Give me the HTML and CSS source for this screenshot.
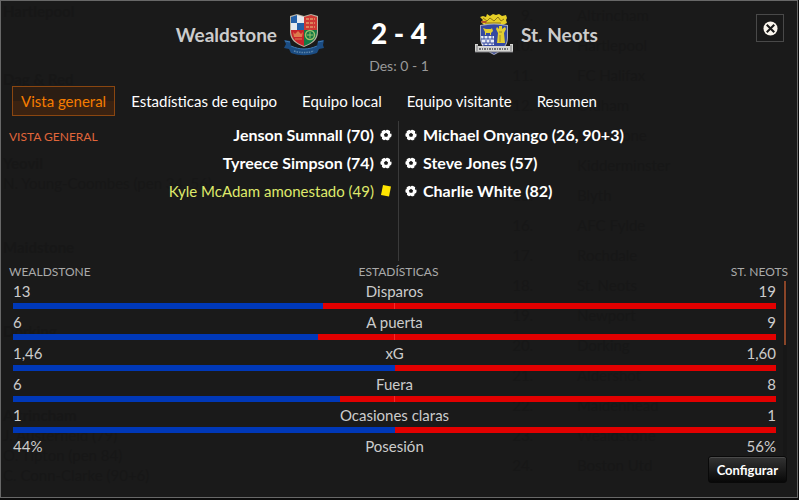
FILE: index.html
```html
<!DOCTYPE html>
<html lang="es">
<head>
<meta charset="utf-8">
<title>Wealdstone 2 - 4 St. Neots</title>
<link rel="stylesheet" href="styles.css">
</head>
<body>
<svg width="0" height="0" class="defs" aria-hidden="true">
  <symbol id="ball" viewBox="0 0 12 12">
    <circle cx="6" cy="6" r="5.600" fill="#fff"/>
    <path d="M6 3.800 8.100 5.400 7.300 7.800H4.700L3.900 5.400Z" fill="#1a1a1a"/>
    <path d="M3.600 0h3.800L5.500 1.700ZM10 1.500l2 3.500-2-.6ZM12 7.500 9.800 11 9.300 8.900ZM7.500 12H3.500l2-1.500ZM2 11 0 7.300l2 .6ZM0 4.500 1 2.200 1.900 4Z" fill="#1a1a1a"/>
  </symbol>
</svg>
<main class="panel">
  <div class="backdrop" aria-hidden="true">
    <div class="fixtures">
      <p><b>Hartlepool</b></p>
      <p><b>Dag &amp; Red</b></p>
      <p><b>Yeovil</b><br>N. Young-Coombes (pen 34, 56)</p>
      <p><b>Maidstone</b></p>
      <p><b>Dorking</b></p>
      <p><b>Altrincham</b><br>J. Austerfield (79)<br>O. Tipton (pen 84)<br>C. Conn-Clarke (90+6)</p>
    </div>
    <ol class="league" start="9">
      <li>Altrincham</li><li>Hartlepool</li><li>FC Halifax</li><li>Oldham</li>
      <li>Maidstone</li><li>Kidderminster</li><li>Blyth</li><li>AFC Fylde</li>
      <li>Rochdale</li><li>St. Neots</li><li>Newport</li><li>Dorking</li>
      <li>Aldershot</li><li>Maidenhead</li><li>Wealdstone</li><li>Boston Utd</li>
    </ol>
  </div>
  <header class="score">
    <div class="team home">
      <span class="team-name">Wealdstone</span>
      <svg class="crest" viewBox="0 0 42 44" aria-hidden="true">
        <path d="M7 3 14 1l7 2 7-2 7 2v16c0 8-6 12-14 15C13 31 7 27 7 19Z" fill="#b9b2a0"/>
        <path d="M8 4l6-2 7 2v13H8Z" fill="#e4e9ee"/>
        <path d="M8 4l6-2v8H8ZM14 10h7v7h-7Z" fill="#2360a8"/>
        <path d="M21 4l7-2 6 2v13H21Z" fill="#cf3833"/>
        <path d="M23 6h9M23 10h9M23 14h9" stroke="#e19a6a" stroke-width="1.500" stroke-dasharray="3 1"/>
        <path d="M8 17h13v16C13 30 8 26 8 17Z" fill="#c8232b"/>
        <path d="M10 19l2 2 3-3 3 3 2-2-1 5h-8Z" fill="#dd7b4d"/>
        <path d="M12 26h7" stroke="#dd7b4d"/>
        <path d="M21 17h13c0 9-5 13-13 16Z" fill="#137a45"/>
        <circle cx="27" cy="22" r="4.500" fill="none" stroke="#9cc06b" stroke-width="1.500"/>
        <path d="M24 22h6M27 19v6" stroke="#9cc06b"/>
        <path d="M1 27l6 1 1 5c9 4 17 4 26 0l1-5 6-1-1 5 1 3-5 1-2 4c-9 3-17 3-26 0l-2-4-5-1 2-4Z" fill="#1b4c82"/>
        <path d="M8 33c9 4 17 4 26 0M2 28l5 1M35 29l5-1" fill="none" stroke="#3f78b0"/>
        <path d="M11 38c7 2 13 2 20 0" fill="none" stroke="#5d86ab" stroke-width="1.500" stroke-dasharray="1.500 1"/>
      </svg>
    </div>
    <div class="result">
      <h1>2 - 4</h1>
      <p>Des: 0 - 1</p>
    </div>
    <div class="team away">
      <svg class="crest" viewBox="0 0 42 44" aria-hidden="true">
        <path d="M7 4l3-1 3 1 1-3 3 2 3-2 3 1 3-1 3 2 4-1 1 3-1 2 1 3-4 2H11L8 9l2-2Z" fill="#e7cf27"/>
        <path d="M10 5l4 3 3-3 4 3 4-4 3 4 3-2M12 10h16" fill="none" stroke="#8f7417"/>
        <path d="M8 8h6l-1 2H9Z" fill="#b4502b"/>
        <path d="M7 12q14-3 28 0v13c0 8-6 13-14 17C13 38 7 33 7 25Z" fill="#a4a9bb"/>
        <path d="M8 13q13-3 26 0v12c0 8-6 12-13 16C14 37 8 33 8 25Z" fill="#3548a0"/>
        <path d="M10 15l3 1h5l1-1 1 3-2 2v2h-1v-2h-4v2h-1v-3Z" fill="#e2ce31"/>
        <path d="M8 23h13v9H9Z" fill="#e9edf5"/>
        <path d="M8 26h13M9 30h12" stroke="#3548a0"/>
        <path d="M11 23v3M15 23v3M19 23v3M13 27v3M17 27v3M11 30v2M15 30v2M19 30v2" stroke="#3548a0"/>
        <path d="M26 13h3v3l3-2 1 2-2 4 1 10h-8l1-10-2-4 1-2 2 2Z" fill="#e2ce31"/>
        <path d="M26 19h3M27 22v7" stroke="#9b862a"/>
        <path d="M2 31h3v2h32v-2h3v8H2Z" fill="#d6d6d3"/>
        <path d="M2 39h38M4 32v6M38 32v6" stroke="#77777a"/>
        <path d="M6 36h30" stroke="#707075" stroke-width="2" stroke-dasharray="2 1 1 1"/>
      </svg>
      <span class="team-name">St. Neots</span>
    </div>
    <button class="close" type="button" aria-label="Cerrar">
      <svg viewBox="0 0 16 16" aria-hidden="true">
        <circle cx="8" cy="8" r="7.500" fill="#fbf6ee"/>
        <path d="M4 4l8 8M12 4l-8 8" stroke="#1a1a1a" stroke-width="2.200"/>
      </svg>
    </button>
  </header>

  <nav class="tabs">
    <a class="active" href="#general" aria-current="page">Vista general</a>
    <a href="#equipo">Estadísticas de equipo</a>
    <a href="#local">Equipo local</a>
    <a href="#visitante">Equipo visitante</a>
    <a href="#resumen">Resumen</a>
  </nav>

  <section class="events" id="general">
    <div class="side home-side">
      <h2>VISTA GENERAL</h2>
      <ul>
        <li>Jenson Sumnall (70) <svg class="icon"><use href="#ball"/></svg></li>
        <li>Tyreece Simpson (74) <svg class="icon"><use href="#ball"/></svg></li>
        <li class="booked">Kyle McAdam amonestado (49) <svg class="icon" viewBox="0 0 12 12"><path d="M3 0l8 1.500-2 10-8-1.500Z" fill="#ffe500"/></svg></li>
      </ul>
    </div>
    <ul class="side">
      <li><svg class="icon"><use href="#ball"/></svg> Michael Onyango (26, 90+3)</li>
      <li><svg class="icon"><use href="#ball"/></svg> Steve Jones (57)</li>
      <li><svg class="icon"><use href="#ball"/></svg> Charlie White (82)</li>
    </ul>
  </section>

  <section class="stats">
    <div class="stats-head">
      <span>WEALDSTONE</span><h2>ESTADÍSTICAS</h2><span>ST. NEOTS</span>
    </div>
    <div class="scroller">
      <div class="rows">
        <div class="row"><span>13</span><span>Disparos</span><span>19</span><div class="bar"><i style="width:40.6%"></i></div></div>
        <div class="row"><span>6</span><span>A puerta</span><span>9</span><div class="bar"><i style="width:40%"></i></div></div>
        <div class="row"><span>1,46</span><span>xG</span><span>1,60</span><div class="bar"><i style="width:50%"></i></div></div>
        <div class="row"><span>6</span><span>Fuera</span><span>8</span><div class="bar"><i style="width:42.8%"></i></div></div>
        <div class="row"><span>1</span><span>Ocasiones claras</span><span>1</span><div class="bar"><i style="width:50%"></i></div></div>
        <div class="row"><span>44%</span><span>Posesión</span><span>56%</span></div>
      </div>
      <div class="track"><div class="thumb"></div></div>
    </div>
  </section>

  <footer><button class="configure" type="button">Configurar</button></footer>
</main>
</body>
</html>
```
FILE: styles.css
```css
* { box-sizing: border-box; }
body {
  margin: 0;
  background: #0b0b0b;
  color: #fff;
  font: 15px/20px Lato, "Open Sans", sans-serif;
}
h1, h2, p, ul, ol { margin: 0; padding: 0; font: inherit; }
ul { list-style: none; }
.defs { position: absolute; }
.panel {
  position: relative;
  display: flex;
  flex-direction: column;
  min-height: calc(100vh - 2px);
  margin-right: 1px;
  border: 1px solid #686868;
  background: #1a1a1a;
  isolation: isolate;
}
.backdrop {
  position: absolute;
  inset: 0;
  z-index: -1;
  display: flex;
  justify-content: space-between;
  overflow: hidden;
  color: #171717;
}
.fixtures { display: flex; flex-direction: column; padding-left: 2px; }
.fixtures p { min-height: 84px; }
.fixtures p:first-child { min-height: 68px; }
.league { width: 278px; padding-left: 18px; }
.league li { height: 30px; padding: 4px 0 0 40px; }
.score {
  position: relative;
  display: grid;
  grid-template-columns: 1fr 148px 1fr;
  align-items: start;
  padding-top: 12px;
}
.team { display: flex; align-items: center; gap: 6px; }
.home { justify-content: flex-end; }
.team-name { font-size: 19px; font-weight: 700; color: #ccc; }
.crest { width: 42px; height: 44px; }
.result { padding-top: 4px; text-align: center; }
.result h1 { font-size: 28px; line-height: 32px; font-weight: 900; }
.result p { padding-top: 7px; color: #999; font-size: 14px; }
.close {
  position: absolute;
  top: 13px;
  right: 13px;
  display: grid;
  place-items: center;
  width: 28px;
  height: 28px;
  padding: 0;
  border: 1px solid #494949;
  background: #191919;
}
.close svg { width: 15px; height: 15px; }
.tabs { display: flex; gap: 7px; padding: 10px 11px 5px; }
.tabs a {
  padding: 4px 8px;
  border: 1px solid transparent;
  color: #fff;
  text-decoration: none;
}
.tabs .active {
  border-color: #8a4610;
  background: linear-gradient(#2b1d13 50%, #3a2211 50%);
  color: #f57c00;
}
.events {
  display: grid;
  grid-template-columns: 1fr 1fr;
  min-height: 140px;
}
.side { font-size: 16px; font-weight: 700; padding-left: 6px; }
.side li { display: flex; align-items: center; gap: 6px; height: 28px; }
.home-side {
  display: flex;
  justify-content: space-between;
  padding: 0 6px 0 8px;
  border-right: 1px solid #3a3a3a;
}
.home-side li { justify-content: flex-end; }
.home-side h2 { padding-top: 6px; color: #e0663a; font-size: 12px; font-weight: 400; }
.home-side .booked { color: #dfe96b; font-size: 15px; font-weight: 400; }
.icon { width: 12px; height: 12px; }
.stats-head {
  display: grid;
  grid-template-columns: 1fr auto 1fr;
  padding: 2px 9px 0 8px;
  color: #aaa;
  font-size: 12px;
  line-height: 18px;
}
.stats-head span:last-child { text-align: right; }
.scroller { display: flex; gap: 7px; padding: 0 10px 0 12px; }
.rows { flex: 1; color: #ccc; }
.row {
  display: grid;
  grid-template-columns: 1fr auto 1fr;
  line-height: 20px;
  padding-bottom: 3px;
}
.row:last-child { padding-bottom: 0; }
.row span:nth-child(3) { text-align: right; }
.bar {
  grid-column: 1 / -1;
  height: 6px;
  margin-top: 2px;
  background: linear-gradient(90deg, transparent 50%, #f02a2a 50%, #f02a2a calc(50% + 1px), transparent 0) #e20000;
}
.bar i { display: block; height: 6px; background: #0038b8; }
.track { width: 4px; background: #171717; }
.thumb { width: 2px; height: 64px; margin: 0 auto; background: #8a4528; }
footer { display: flex; justify-content: flex-end; padding: 0 10px 13px; }
.configure {
  height: 27px;
  padding: 0 8px;
  border: 1px solid #090909;
  border-radius: 3px;
  background: linear-gradient(#333, #080808);
  box-shadow: inset 0 1px #4a4a4a;
  color: #fff;
  font: 700 13px/20px Lato, "Open Sans", sans-serif;
}
```
